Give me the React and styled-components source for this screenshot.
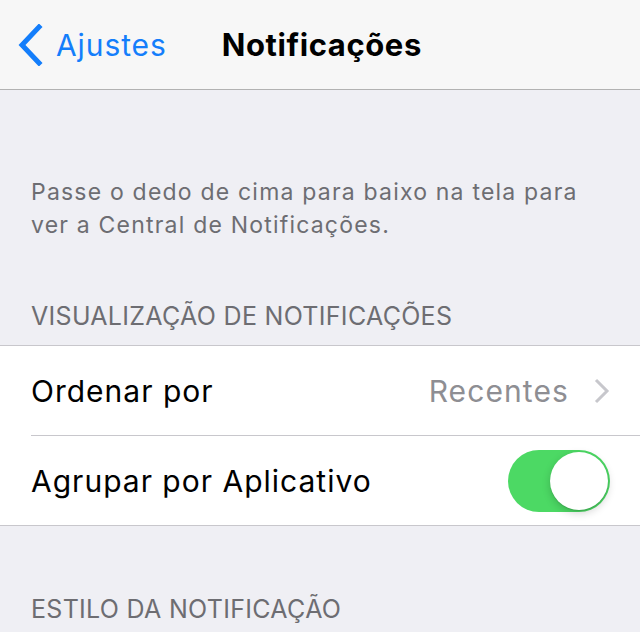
import React, { useState } from "react";
import styled, { createGlobalStyle } from "styled-components";

const GlobalStyle = createGlobalStyle`
  html, body {
    margin: 0;
    padding: 0;
    background: #efeff4;
  }
  body {
    font-family: Inter, "Liberation Sans", Arial, sans-serif;
    -webkit-font-smoothing: antialiased;
  }
`;

const Page = styled.div`
  width: 640px;
  height: 632px;
  overflow: hidden;
  background: #efeff4;
`;

const NavBar = styled.div`
  height: 89px;
  display: flex;
  align-items: center;
  background: #f7f7f7;
  border-bottom: 1px solid #b2b2b2;
  padding-left: 17px;
`;

const BackButton = styled.div`
  display: flex;
  align-items: center;
  gap: 13px;
  color: #147efb;
  font-size: 30px;
  letter-spacing: 0.9px;
  margin-top: 1px;
`;

const Title = styled.div`
  margin-left: 55px;
  font-size: 31px;
  font-weight: 700;
  letter-spacing: 0.6px;
  color: #000;
`;

const Note = styled.p`
  margin: 86px 0 0;
  padding: 0 31px;
  font-size: 23px;
  line-height: 33px;
  letter-spacing: 1.2px;
  color: #6d6d72;
`;

const SectionHeader = styled.div`
  margin-top: ${(p) => p.gap}px;
  padding: 0 31px;
  font-size: 25px;
  line-height: 30px;
  letter-spacing: 0.3px;
  color: #6d6d72;
  text-transform: uppercase;
`;

const Group = styled.div`
  margin-top: 14px;
  background: #fff;
  border-top: 1px solid #c8c7cc;
  border-bottom: 1px solid #c8c7cc;
`;

const Row = styled.div`
  height: 89px;
  margin-left: 31px;
  padding-right: 30px;
  display: flex;
  align-items: center;
  border-top: ${(p) => (p.first ? "none" : "1px solid #c8c7cc")};
`;

const Label = styled.div`
  flex: 1;
  font-size: 30px;
  letter-spacing: 1px;
  color: #000;
`;

const Value = styled.div`
  display: flex;
  align-items: center;
  gap: 25px;
  font-size: 30px;
  letter-spacing: 1.1px;
  color: #8e8e93;
`;

const Track = styled.button`
  position: relative;
  width: 102px;
  height: 62px;
  border: none;
  padding: 0;
  border-radius: 31px;
  background: ${(p) => (p.on ? "#4cd964" : "#e5e5ea")};
  cursor: pointer;
`;

const Knob = styled.span`
  position: absolute;
  top: 2px;
  left: ${(p) => (p.on ? "42px" : "2px")};
  width: 58px;
  height: 58px;
  border-radius: 50%;
  background: #fff;
  box-shadow: 0 3px 8px rgba(0, 0, 0, 0.18), 0 1px 1px rgba(0, 0, 0, 0.12);
`;

const BackChevron = () => (
  <svg width="26" height="42" viewBox="0 0 26 42">
    <path
      d="M22 3 L5 21 L22 39"
      fill="none"
      stroke="#147efb"
      strokeWidth="5"
      strokeLinecap="square"
    />
  </svg>
);

const Chevron = () => (
  <svg width="16" height="26" viewBox="0 0 16 26">
    <path
      d="M2 2 L13 13 L2 24"
      fill="none"
      stroke="#c7c7cc"
      strokeWidth="3"
    />
  </svg>
);

const App = () => {
  const [grouped, setGrouped] = useState(true);

  return (
    <Page>
      <GlobalStyle />
      <NavBar>
        <BackButton>
          <BackChevron />
          Ajustes
        </BackButton>
        <Title>Notificações</Title>
      </NavBar>

      <Note>
        Passe o dedo de cima para baixo na tela para ver a Central de
        Notificações.
      </Note>

      <SectionHeader gap={59}>Visualização de Notificações</SectionHeader>
      <Group>
        <Row first>
          <Label>Ordenar por</Label>
          <Value>
            Recentes
            <Chevron />
          </Value>
        </Row>
        <Row>
          <Label>Agrupar por Aplicativo</Label>
          <Track on={grouped} onClick={() => setGrouped(!grouped)}>
            <Knob on={grouped} />
          </Track>
        </Row>
      </Group>

      <SectionHeader gap={68}>Estilo da Notificação</SectionHeader>
    </Page>
  );
};

export default App;
